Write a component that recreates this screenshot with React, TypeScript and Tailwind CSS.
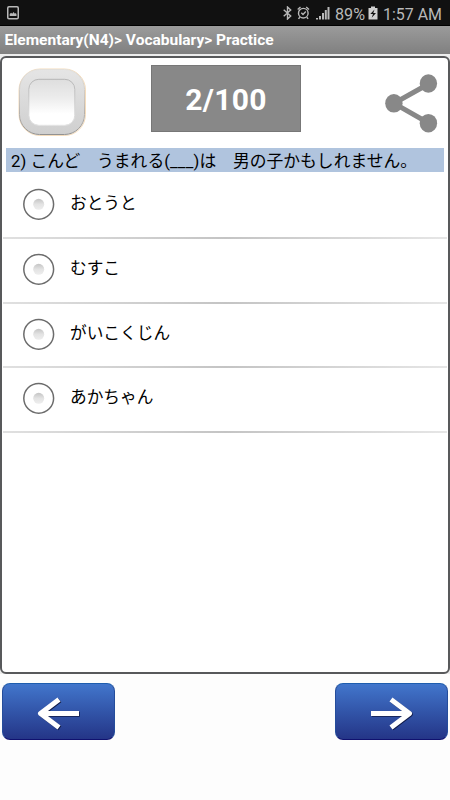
const answers = ["おとうと", "むすこ", "がいこくじん", "あかちゃん"];

function StatusBar() {
  return (
    <div className="flex h-[26px] items-center border-b border-black bg-[#111] text-[#b9b9b9]">
      <svg className="ml-[7px] mt-px h-[14px] w-3" viewBox="0 0 12 14" fill="none">
        <rect x="0.75" y="0.75" width="10.5" height="12" rx="1.2" stroke="currentColor" strokeWidth="1.5" />
        <path d="M2.7 10V8l1.4-1.3 1.1 1L6.6 6l1.3 1.7.8-.7.8 1v2z" fill="currentColor" />
      </svg>
      <svg className="ml-[264px] h-[14px] w-[9px]" viewBox="0 0 9 14" fill="none" stroke="currentColor" strokeWidth="1.4">
        <path d="M.7 3.7 7.7 10 4.5 13V1l3.2 3L.7 10.2" />
      </svg>
      <svg className="ml-[5px] h-[14px] w-[13px]" viewBox="0 0 13 14" fill="none" stroke="currentColor" strokeWidth="1.4">
        <circle cx="6.3" cy="7.2" r="4.8" />
        <path d="M.7 3.5 3.5 1M9.2 1 12 3.5M2.8 11.2l-1.3 1.7M9.8 11.2l1.3 1.7M4.3 6.8l1.7 1.7 2.8-2.9" />
      </svg>
      <svg className="ml-[6px] h-[14px] w-[14px]" viewBox="0 0 14 14" fill="currentColor">
        <path d="M0 12h2v1.5H0zM3 10h2v3.5H3zM6 7h2v6.5H6zM8.8 4h2v9.5h-2zM11.5 1h2v12.5h-2z" />
      </svg>
      <svg className="ml-[5px] h-[26px] w-[30px]" viewBox="0 0 30 26">
        <text x="0" y="19.6" fill="currentColor" fontSize="16.5" textLength="30" lengthAdjust="spacingAndGlyphs">89%</text>
      </svg>
      <svg className="ml-[3px] h-[14px] w-[10px]" viewBox="0 0 10 14">
        <path d="M3 .5h4V2h2.5v11.5h-9V2H3z" fill="#d0d0d0" />
        <path d="M6.5 3.5 2.3 8H5l-1.3 3.8L8 7H5.3z" fill="#111" />
      </svg>
      <svg className="ml-[5px] h-[26px] w-[60px]" viewBox="0 0 60 26">
        <text x="0" y="19.6" fill="currentColor" fontSize="16.5" textLength="59" lengthAdjust="spacingAndGlyphs">1:57 AM</text>
      </svg>
    </div>
  );
}

function Checkbox() {
  return (
    <svg className="h-[68px] w-[68px]" viewBox="0 0 68 68">
      <defs>
        <linearGradient id="frame" x2="0" y2="1">
          <stop stopColor="#e5e5e5" />
          <stop offset="1" stopColor="#cfcfcf" />
        </linearGradient>
        <linearGradient id="edge" x2="0" y2="1">
          <stop stopColor="#e2dfda" />
          <stop offset="0.5" stopColor="#c8c2bc" />
          <stop offset="1" stopColor="#929292" />
        </linearGradient>
        <linearGradient id="well" x2="0" y2="1">
          <stop stopColor="#dedede" />
          <stop offset="0.4" stopColor="#ececec" />
          <stop offset="0.75" stopColor="#fff" />
        </linearGradient>
        <linearGradient id="wellEdge" x2="0" y2="1">
          <stop stopColor="#b5b5b5" />
          <stop offset="1" stopColor="#e4e4e4" />
        </linearGradient>
      </defs>
      <rect x="1" y="1" width="66.5" height="66.5" rx="21" fill="none" stroke="#edc58e" strokeWidth="0.6" />
      <rect x="1.5" y="1.5" width="65" height="65" rx="20" fill="url(#frame)" stroke="url(#edge)" />
      <rect x="10.8" y="11.3" width="46" height="46" rx="10" fill="url(#well)" stroke="url(#wellEdge)" />
    </svg>
  );
}

function ShareIcon() {
  return (
    <svg className="h-[60px] w-[53px]" viewBox="0 0 53 60">
      <path d="M43.5 10 9 29.3 43.5 49" fill="none" stroke="#888" strokeWidth="5" />
      <g fill="#888">
        <ellipse cx="43.4" cy="9.5" rx="8.7" ry="9.3" />
        <ellipse cx="8.9" cy="29.3" rx="8.7" ry="9.3" />
        <ellipse cx="43.4" cy="49.2" rx="8.7" ry="9.3" />
      </g>
    </svg>
  );
}

function Radio() {
  return (
    <svg className="h-8 w-8 shrink-0" viewBox="0 0 32 32">
      <defs>
        <linearGradient id="dot" x2="0" y2="1">
          <stop stopColor="#c4c4c4" />
          <stop offset="0.5" stopColor="#e3e3e3" />
          <stop offset="1" stopColor="#eee" />
        </linearGradient>
      </defs>
      <circle cx="15.7" cy="16.3" r="14.9" fill="#fff" stroke="#6c6c6c" strokeWidth="1.5" />
      <circle cx="15.7" cy="16.3" r="5.5" fill="url(#dot)" />
    </svg>
  );
}

function ArrowButton({ label, d }: { label: string; d: string }) {
  return (
    <button
      aria-label={label}
      className="h-[57px] w-[113px] rounded-[8px] border border-t-[#1e5dae] border-r-[#254d9b] border-b-[#10116f] border-l-[#254d9b] bg-linear-to-b from-[#4276cc] to-[#243587]"
    >
      <svg className="h-full w-full" viewBox="0 0 111 55" fill="none" strokeWidth="5" strokeLinejoin="round">
        <path d={d} stroke="#101b48" transform="translate(.8 .8)" />
        <path d={d} stroke="#fff" />
      </svg>
    </button>
  );
}

export default function App() {
  return (
    <div className="flex h-[800px] w-[450px] flex-col overflow-hidden bg-[#fdfdfd] font-['Roboto','Noto_Sans_CJK_JP',sans-serif] text-black">
      <StatusBar />
      <header className="flex h-7 items-center bg-linear-to-b from-[#9b9b9b] to-[#808080] pl-[4.5px]">
        <h1 className="text-[15.5px] leading-7 font-bold whitespace-nowrap text-white">
          Elementary(N4)&gt; Vocabulary&gt; Practice
        </h1>
      </header>
      <div className="bg-[#ededed] pt-[2px]">
        <main className="h-[618px] rounded-[6px] border-2 border-[#58595b] bg-white">
          <div className="flex h-[90px] pr-[10px] pl-4">
            <div className="pt-[10px]">
              <Checkbox />
            </div>
            <div className="mt-[7px] ml-[65px] flex h-[67px] w-[150px] items-center justify-center border border-[#777] bg-[#888] pt-[2px] text-[30px] font-bold tracking-[0.3px] text-white">
              2/100
            </div>
            <div className="ml-auto pt-4">
              <ShareIcon />
            </div>
          </div>
          <p className="mx-1 h-6 bg-[#b0c4de] pl-[5px] text-[16.8px] leading-[26px] whitespace-nowrap">
            2) こんど　うまれる(<span className="tracking-[0.3px]">___</span>)は　男の子かもしれません。
          </p>
          <ul>
            {answers.map((answer) => (
              <li key={answer} className="flex h-[64.6px] flex-col first:h-[67px]">
                <div className="mt-auto flex h-[62.6px] items-start pl-[21px]">
                  <div className="pt-[14px]">
                    <Radio />
                  </div>
                  <span className="ml-[15px] pt-[18px] text-[16.7px] leading-6">{answer}</span>
                </div>
                <div className="mx-px h-[2px] bg-linear-to-r from-[#e0e0e0] via-[#c4c4c4] to-[#e6e6e6]" />
              </li>
            ))}
          </ul>
        </main>
      </div>
      <footer className="flex justify-between px-[2px] pt-[9px]">
        <ArrowButton label="Previous" d="M76 29.5H38M56 15.5 37.5 29.5 56 43.5" />
        <ArrowButton label="Next" d="M35 29.5H73M55 15.5 73.5 29.5 55 43.5" />
      </footer>
    </div>
  );
}
